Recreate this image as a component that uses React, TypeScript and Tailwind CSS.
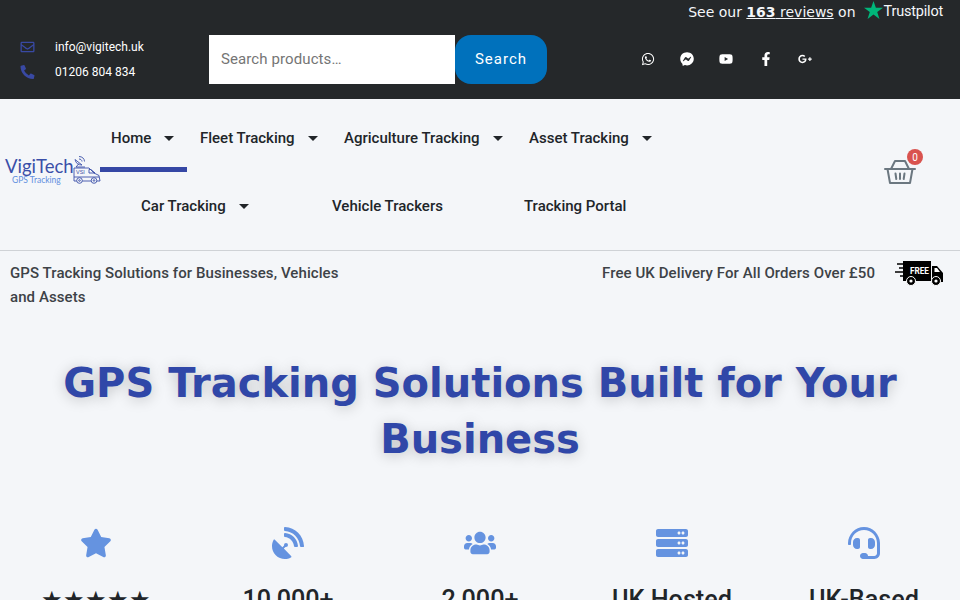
import React from "react";
import { FaWhatsapp, FaFacebookMessenger, FaYoutube, FaFacebookF, FaGooglePlusG, FaRegEnvelope, FaPhoneAlt, FaStar, FaSatelliteDish, FaUsers, FaServer, FaHeadset } from "react-icons/fa";

const Caret = () => (
  <svg width="10" height="5" viewBox="0 0 10 5" className="block"><path d="M0 0h10L5 5z" fill="#212529" /></svg>
);

const NavItem = ({ label, caret = false, className = "" }: { label: string; caret?: boolean; className?: string }) => (
  <a className={`flex items-center h-[68px] text-[15px] font-medium text-[#212529] whitespace-nowrap ${className}`}>
    <span>{label}</span>
    {caret && <span className="ml-[13px]"><Caret /></span>}
  </a>
);

const Logo = () => (
  <div className="relative w-[95px] h-[30px] shrink-0 font-['Lato',sans-serif]">
    <div className="text-[18.5px] leading-[20px] text-[#3a4fa8]">VigiTech</div>
    <div className="text-[8.5px] leading-[8px] text-[#5f8fdf] pl-[7px]">GPS Tracking</div>
    <svg className="absolute left-[68px] top-0" width="28" height="28" viewBox="0 0 28 28" fill="none" stroke="#3a4fa8" strokeWidth="0.9">
      <path d="M2 3.500a7 7 0 0 0 7 5.500zM6 7.500l-3 3.500h9M6 0.500c3 0 5.500 2 5.500 5M6 3c1.500 0 3 1 3 2.500" />
      <path d="M1 12h15l5 5 5 2.500 1 5.500H1z" fill="#f4f6f9" />
      <path d="M16 13.500h2l4 3.500h-6z" />
      <path d="M1 21h25" />
      <circle cx="6.500" cy="24.500" r="2.800" fill="#f4f6f9" /><circle cx="21" cy="24.500" r="2.800" fill="#f4f6f9" />
      <circle cx="6.500" cy="24.500" r="0.800" /><circle cx="21" cy="24.500" r="0.800" />
      <text x="3" y="18" fontSize="5.500" fill="#3a4fa8" stroke="none" fontFamily="Liberation Sans, sans-serif">VSI</text>
    </svg>
  </div>
);

const Basket = () => (
  <svg width="32" height="25" viewBox="0 0 32 25" fill="none" stroke="#6b7780" strokeWidth="2">
    <path d="M1 9h30" strokeLinecap="round" />
    <path d="M3.500 9l2.500 14h20l2.500-14" strokeLinejoin="round" />
    <path d="M7 9l4-8h10l4 8" strokeLinejoin="round" />
    <path d="M11.500 13.500l.8 5.500M16 13.500V19M20.500 13.500l-.8 5.500" strokeLinecap="round" />
  </svg>
);

const FreeTruck = () => (
  <svg width="48" height="25" viewBox="0 0 48 25">
    <path d="M8 0h28v20H8zM37 5h5l6 7v9H37z" fill="#000" />
    <path d="M2 3h12M4 7h10M0 11h12M5 15h8" stroke="#000" strokeWidth="1.600" fill="none" />
    <path d="M39.500 7h2.500l3 4h-5.500z" fill="#fff" />
    <circle cx="16" cy="20" r="4.500" fill="#000" stroke="#fff" strokeWidth="1" /><circle cx="16" cy="20" r="1.600" fill="#fff" />
    <circle cx="41" cy="20" r="4.500" fill="#000" stroke="#fff" strokeWidth="1" /><circle cx="41" cy="20" r="1.600" fill="#fff" />
    <text x="15" y="12.500" fontSize="9" fontWeight="700" fill="#fff" textLength="19" lengthAdjust="spacingAndGlyphs" fontFamily="Roboto, sans-serif">FREE</text>
  </svg>
);

const stats = [
  { icon: <FaStar size={32} />, label: "★★★★★", size: "text-[24px]" },
  { icon: <FaSatelliteDish size={32} />, label: "10,000+", size: "text-[25.2px]" },
  { icon: <FaUsers size={32} />, label: "2,000+", size: "text-[25.2px]" },
  { icon: <FaServer size={32} />, label: "UK Hosted", size: "text-[25.2px]" },
  { icon: <FaHeadset size={32} />, label: "UK-Based", size: "text-[25.2px]" },
];

export default function App() {
  return (
    <div className="h-[600px] overflow-hidden bg-[#f4f6f9] font-['Roboto',sans-serif] text-[#212529]">
      <header className="h-[99px] bg-[#25282a] text-white">
        <div className="flex justify-end items-center h-[24px] pr-[17px] font-['DejaVu_Sans',sans-serif] text-[14px] text-[#f4f6f9]">
          <span>See our <a className="underline"><b>163</b> reviews</a> on</span>
          <span className="flex items-center ml-[8px]">
            <svg width="19" height="19" viewBox="0 0 24 24" className="-mt-[4px]"><path d="M12 0l3 8.600h9l-7.300 5.300 2.800 8.700L12 17.200l-7.500 5.400 2.800-8.700L0 8.600h9z" fill="#00b67a" /></svg>
            <span className="ml-[1px] font-['Roboto',sans-serif] text-[14.500px] tracking-[-0.2px]">Trustpilot</span>
          </span>
        </div>
        <div className="flex items-center h-[49px] mt-[11px]">
          <div className="w-[209px] -mt-px pl-[20px] text-[12px]">
            <div className="flex items-center h-[24px]">
              <FaRegEnvelope size={14} className="text-[#3949a3] w-[15px]" />
              <span className="ml-[20px]">info@vigitech.uk</span>
            </div>
            <div className="flex items-center h-[24px] mt-px">
              <FaPhoneAlt size={14} className="text-[#3949a3] w-[15px]" />
              <span className="ml-[20px]">01206 804 834</span>
            </div>
          </div>
          <div className="flex items-center w-[246px] h-[49px] bg-white pl-[12px] text-[15px] text-[#757575] tracking-[0.1px]">Search products…</div>
          <button className="w-[92px] h-[49px] rounded-[16px] bg-[#0071bc] text-[15px] font-normal text-white tracking-[1px]">Search</button>
          <div className="flex items-center ml-[81px] -mt-[2px] text-white">
            <span className="w-[39px] flex justify-center"><FaWhatsapp size={14} /></span>
            <span className="w-[39px] flex justify-center"><FaFacebookMessenger size={14} /></span>
            <span className="w-[39px] flex justify-center"><FaYoutube size={14} /></span>
            <span className="w-[40px] flex justify-center pl-px"><FaFacebookF size={14} /></span>
            <span className="w-[39px] flex justify-center"><FaGooglePlusG size={14} /></span>
          </div>
        </div>
      </header>

      <nav className="flex items-start h-[152px] pl-[5px] border-b border-[#cfd2d6]">
        <div className="mt-[57px]"><Logo /></div>
        <div className="w-[572px] pt-[5px]">
          <div className="flex">
            <div className="relative w-[89px] pl-[11px]">
              <NavItem label="Home" caret />
              <div className="absolute left-0 top-[63px] w-[87px] h-[5px] bg-[#3547a5]" />
            </div>
            <NavItem label="Fleet Tracking" caret className="w-[144px] pl-[11px]" />
            <NavItem label="Agriculture Tracking" caret className="w-[196px] pl-[11px]" />
            <NavItem label="Asset Tracking" caret />
          </div>
          <div className="flex pl-[41px]">
            <NavItem label="Car Tracking" caret className="w-[191px]" />
            <NavItem label="Vehicle Trackers" className="w-[192px]" />
            <NavItem label="Tracking Portal" />
          </div>
        </div>
        <div className="relative ml-[212px] mt-[61px]">
          <Basket />
          <span className="absolute -top-[11px] left-[23px] flex items-center justify-center w-[16px] h-[16px] rounded-full bg-[#d9534f] text-[10px] text-white">0</span>
        </div>
      </nav>

      <div className="flex justify-between pl-[10px] pr-[17px] pt-[10px]">
        <p className="w-[340px] text-[15px] leading-[24px] font-medium tracking-[0.08px] text-[#3d4247]">GPS Tracking Solutions for Businesses, Vehicles and Assets</p>
        <div className="flex items-start">
          <span className="text-[15px] leading-[24px] font-medium tracking-[0.08px] text-[#3d4247]">Free UK Delivery For All Orders Over £50</span>
          <span className="ml-[20px]"><FreeTruck /></span>
        </div>
      </div>

      <h1 className="mt-[46px] px-[40px] text-center font-['DejaVu_Sans',sans-serif] text-[40px] leading-[56px] font-bold text-[#3047a8] [text-shadow:0_2px_14px_rgba(0,0,0,0.22)]">
        GPS Tracking Solutions Built for Your Business
      </h1>

      <div className="grid grid-cols-5 mt-[60px]">
        {stats.map((s) => (
          <div key={s.label} className="flex flex-col items-center">
            <div className="h-[32px] text-[#6593e0]">{s.icon}</div>
            <div className={`mt-[25px] leading-[32px] font-medium text-[#212529] ${s.size}`}>{s.label}</div>
          </div>
        ))}
      </div>
    </div>
  );
}
